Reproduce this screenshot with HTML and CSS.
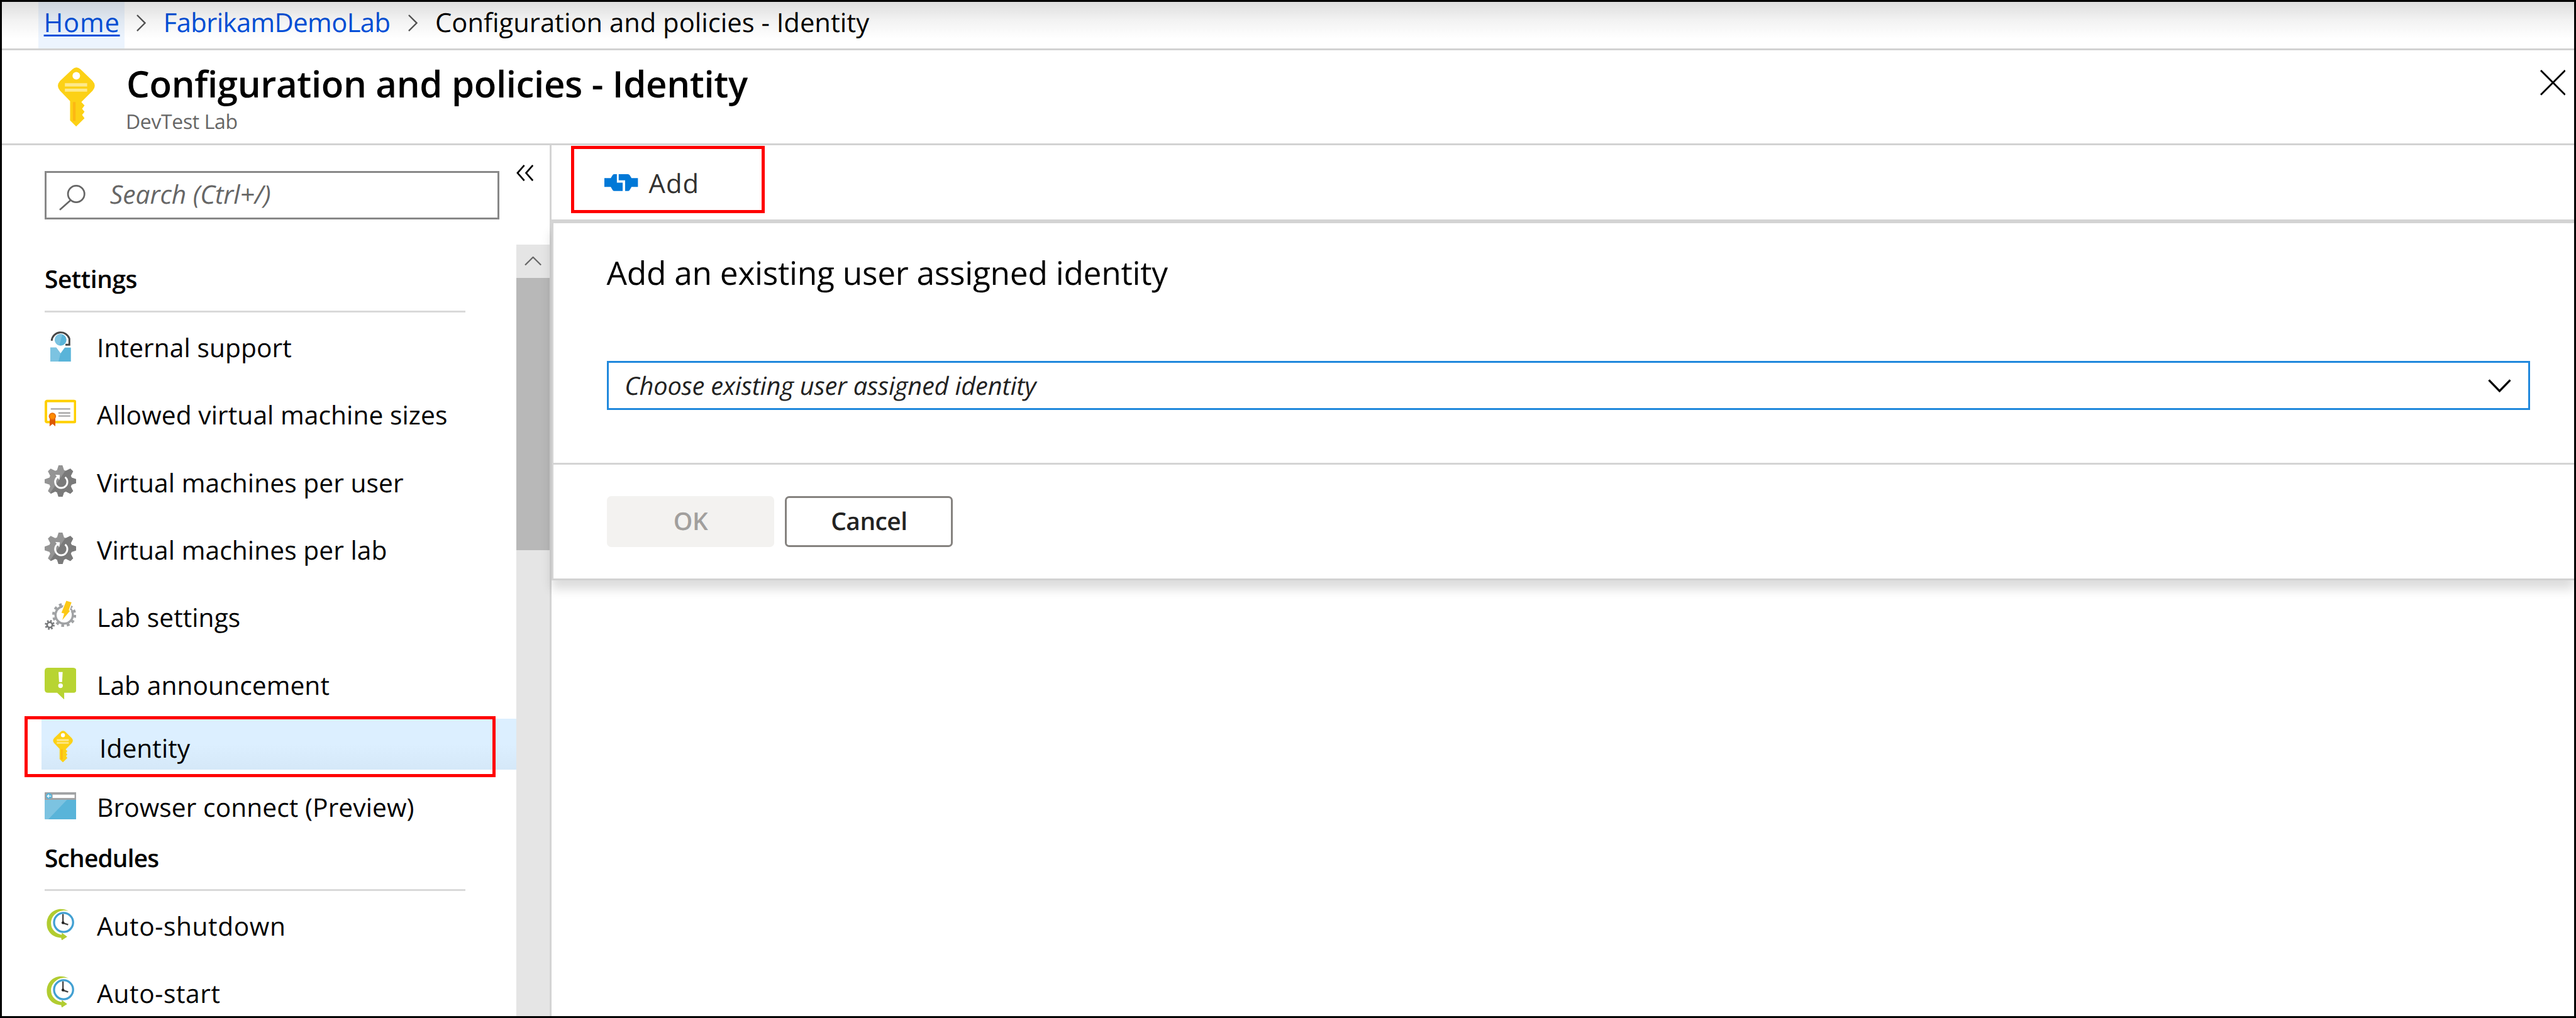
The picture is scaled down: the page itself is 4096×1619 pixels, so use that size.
FILE: index.html
```html
<!DOCTYPE html>
<html lang="en">
<head>
<meta charset="utf-8">
<title>Configuration and policies - Identity</title>
<link rel="stylesheet" href="styles.css">
</head>
<body>
<svg class="defs" aria-hidden="true">
  <defs>
    <polygon id="tooth" points="19.5,10 22.8,0 29.2,0 32.5,10"/>
    <clipPath id="gear-shape">
      <circle cx="26" cy="26" r="19"/>
      <use href="#tooth"/>
      <use href="#tooth" transform="rotate(45 26 26)"/>
      <use href="#tooth" transform="rotate(90 26 26)"/>
      <use href="#tooth" transform="rotate(135 26 26)"/>
      <use href="#tooth" transform="rotate(180 26 26)"/>
      <use href="#tooth" transform="rotate(225 26 26)"/>
      <use href="#tooth" transform="rotate(270 26 26)"/>
      <use href="#tooth" transform="rotate(315 26 26)"/>
    </clipPath>
    <symbol id="gear" viewBox="0 0 52 52">
      <g clip-path="url(#gear-shape)">
        <rect width="52" height="52" fill="#949494"/>
        <polygon points="40,0 52,0 52,52 10,52 10,44" fill="#7a7a7a"/>
      </g>
      <path d="M22 18.6A10 10 0 1 0 33.5 19.4" fill="none" stroke="#fff" stroke-width="3"/>
      <polygon points="17.5,15.5 25,16 24,24" fill="#fff"/>
    </symbol>
    <symbol id="key" viewBox="0 0 61 97">
      <path fill="#fcd116" d="M24 3Q30.3-2.5 37 3L57 22.5Q64 30.5 57 38.5L38.5 57L43.7 62.7L39.7 68L43.7 73L39.7 78L43.7 83.5L30 97L20 87V55.5L3.5 38.5Q-3.5 30.5 3.5 22.5Z"/>
      <circle cx="30.2" cy="14" r="6.2" fill="#fff"/>
      <path fill="#fde98c" d="M11.5 26H48V31.5H11.5ZM11.5 35H48V40H11.5Z"/>
      <rect x="24.5" y="57" width="4.5" height="31" fill="#fdb813"/>
    </symbol>
    <symbol id="clock" viewBox="0 0 52 52">
      <path fill="#b1cc30" d="M39 4C22-5 3.5 6 3.5 25C3.5 38 13 47 27 48L28 52L37 46L28 39.5V43C18 41 10 34 10.5 23C11 10 25 0 39 4Z"/>
      <circle cx="31" cy="22.7" r="15.6" fill="#fff" stroke="#42a0d2" stroke-width="3.4"/>
      <path d="M30 9V23.5L38.5 26.5" fill="none" stroke="#444" stroke-width="2.4"/>
      <circle cx="30" cy="23.2" r="2.3" fill="#222"/>
    </symbol>
  </defs>
</svg>

<div class="portal">
  <nav class="breadcrumb">
    <a class="crumb crumb-home">Home</a>
    <svg class="crumb-sep" viewBox="0 0 16 28"><path d="M1 1L14 14L1 27"/></svg>
    <a class="crumb crumb-lab">FabrikamDemoLab</a>
    <svg class="crumb-sep" viewBox="0 0 16 28"><path d="M1 1L14 14L1 27"/></svg>
    <span class="crumb crumb-current">Configuration and policies - Identity</span>
  </nav>

  <header class="blade-header">
    <svg class="header-key"><use href="#key"/></svg>
    <div class="titles">
      <h1>Configuration and policies - Identity</h1>
      <p>DevTest Lab</p>
    </div>
    <svg class="close" viewBox="0 0 42 42"><path d="M1 1L41 41M41 1L1 41"/></svg>
  </header>

  <div class="blade-body">
    <aside class="sidebar">
      <div class="search-row">
        <div class="search">
          <svg class="search-icon" viewBox="0 0 44 42"><circle cx="28" cy="15" r="13.5"/><path d="M19 25L1 41"/></svg>
          <span>Search (Ctrl+/)</span>
        </div>
        <svg class="collapse" viewBox="0 0 29 27"><path d="M13 1L2 13.5L13 26M27 1L16 13.5L27 26"/></svg>
      </div>
      <div class="menu">
        <div class="menu-list">
          <h2 class="group">Settings</h2>
          <div class="item">
            <svg viewBox="0 0 52 52"><path fill="#59b4d9" d="M9.3 28.5H19L26 38L33 28.5H43V52H9.3Z"/><path fill="#7cc3e1" d="M9.3 28.5H19L26 38L22.5 52H9.3Z"/><circle cx="26.3" cy="16" r="9.5" fill="#59b4d9"/><path fill="#7cc3e1" d="M29 6.9A9.5 9.5 0 1 0 24 25.2Z"/><path d="M11.5 17.5A14.9 14.9 0 0 1 40.5 14V24H34" fill="none" stroke="#464646" stroke-width="3"/></svg>
            <span>Internal support</span>
          </div>
          <div class="item">
            <svg viewBox="0 0 52 52"><rect x="2" y="6" width="48" height="34.5" rx="2" fill="#fff" stroke="#ffd000" stroke-width="4.2"/><path d="M10 19H42M22.5 25.5H42M22.5 30.5H42" stroke="#a8a8a8" stroke-width="2.4"/><path fill="#dd5900" d="M8.5 34H17.5V47.5L13 43.5L8 47.5Z"/><circle cx="12.7" cy="31" r="5" fill="#ff8c00" stroke="#e8700a" stroke-width="2"/></svg>
            <span>Allowed virtual machine sizes</span>
          </div>
          <div class="item"><svg><use href="#gear"/></svg><span>Virtual machines per user</span></div>
          <div class="item"><svg><use href="#gear"/></svg><span>Virtual machines per lab</span></div>
          <div class="item">
            <svg viewBox="0 0 52 52"><g fill="none" stroke="#a0a2a4"><circle cx="32" cy="24.7" r="14.2" stroke-width="3.6"/><circle cx="32" cy="24.7" r="17.6" stroke-width="4.2" stroke-dasharray="4.6 4.615"/></g><g fill="none" stroke="#76787a"><circle cx="8.3" cy="41" r="4.3" stroke-width="2.8"/><circle cx="8.3" cy="41" r="6.7" stroke-width="2.8" stroke-dasharray="2.6 2.662"/></g><path d="M35.5 1.5L44 4L39.5 17L41.5 18L29 33L32 22.5L27.5 21Z" fill="#fff" stroke="#fff" stroke-width="3"/><path d="M35.5 1.5L44 4L39.5 17L41.5 18L29 33L32 22.5L27.5 21Z" fill="#fcc816"/></svg>
            <span>Lab settings</span>
          </div>
          <div class="item">
            <svg viewBox="0 0 52 52"><path fill="#b8d432" d="M5.5 0H46.5Q52 0 52 5.5V35.5Q52 41 46.5 41H32V52L20.5 41H5.5Q0 41 0 35.5V5.5Q0 0 5.5 0Z"/><path fill="#fff" d="M22.7 7H29.5L28.6 23.5H23.6Z"/><circle cx="26" cy="29.3" r="3.8" fill="#fff"/></svg>
            <span>Lab announcement</span>
          </div>
          <div class="item selected"><svg><use href="#key"/></svg><span>Identity</span></div>
          <div class="item browser">
            <svg viewBox="0 0 52 52"><rect y="4" width="52" height="44.5" rx="1.5" fill="#59b4d9"/><path fill="#7cc3e1" d="M0 16H37L6 48.5H1.5Q0 48.5 0 47Z"/><path fill="#a0a2a4" d="M1.5 4H50.5Q52 4 52 5.5V16.5H0V5.5Q0 4 1.5 4Z"/><rect x="13" y="8" width="36" height="5.5" fill="#fff"/><circle cx="7" cy="10.5" r="5" fill="#59b4d9"/><path d="M10.5 10.5H4.5M7 8L4.5 10.5L7 13" fill="none" stroke="#fff" stroke-width="1.3"/></svg>
            <span>Browser connect (Preview)</span>
          </div>
          <h2 class="group schedules">Schedules</h2>
          <div class="item auto"><svg><use href="#clock"/></svg><span>Auto-shutdown</span></div>
          <div class="item auto"><svg><use href="#clock"/></svg><span>Auto-start</span></div>
        </div>
        <div class="scrollbar">
          <div class="scroll-up"><svg viewBox="0 0 28 15"><path d="M1 14L14 1L27 14"/></svg></div>
          <div class="scroll-thumb"></div>
        </div>
      </div>
    </aside>

    <main class="content">
      <div class="toolbar">
        <div class="add-button">
          <svg viewBox="0 0 57 30"><path d="M1 7.5H11.5L14.5 2.5Q15.5 1 17.5 1H21.5V15H31V28.7H17.5Q15.5 28.7 14.5 27L11.5 22H1ZM24.5 1H39.5Q41.5 1 42.5 2.7L45.5 7.5H56V22H45.5L42.5 27Q41.5 28.7 39.5 28.7H35V11H24.5Z"/></svg>
          <span>Add</span>
        </div>
      </div>
      <section class="dialog">
        <div class="dialog-body">
          <h3>Add an existing user assigned identity</h3>
          <div class="dropdown">
            <span>Choose existing user assigned identity</span>
            <svg viewBox="0 0 38 22"><path d="M1.5 1.5L19 19.5L36.5 1.5"/></svg>
          </div>
        </div>
        <div class="dialog-footer">
          <div class="button disabled">OK</div>
          <div class="button">Cancel</div>
        </div>
      </section>
    </main>
  </div>
</div>
</body>
</html>
```
FILE: styles.css
```css
html {
  font-size: 9.70616px;
}

*, *::before, *::after {
  box-sizing: border-box;
}

body {
  margin: 0;
  background: #fff;
  color: #000;
  font-family: "Open Sans", "Noto Sans", sans-serif;
  text-rendering: geometricPrecision;
}

h1, h2, h3, p {
  margin: 0;
}

svg {
  display: block;
  flex: none;
}

.defs {
  position: absolute;
  width: 0;
  height: 0;
}

.portal {
  display: flex;
  flex-direction: column;
  width: 100vw;
  height: 100vh;
  border: 3px solid #000;
  overflow: hidden;
}

/* Breadcrumb */

.breadcrumb {
  display: flex;
  align-items: flex-start;
  flex: none;
  height: 7.95rem;
  padding-left: 6rem;
  border-bottom: 3px solid #d2d2d2;
  position: relative;
  white-space: nowrap;
}

.breadcrumb::after {
  content: "";
  position: absolute;
  inset: 0 0 auto;
  height: 6rem;
  background: linear-gradient(rgba(0, 0, 0, .135), rgba(0, 0, 0, .05) 50%, rgba(0, 0, 0, 0));
}

.crumb {
  font-size: 4.3rem;
  line-height: 6.8rem;
}

.crumb-home {
  width: 14.1rem;
  height: 7.65rem;
  padding-left: .86rem;
  background: #ecf4fe;
  color: #0050dc;
  letter-spacing: .08rem;
  text-decoration: underline;
  text-decoration-thickness: 3px;
  text-underline-offset: 4px;
}

.crumb-sep {
  width: 1.6rem;
  height: 2.8rem;
  margin: 2.1rem 2.85rem 0 2.8rem;
  fill: none;
  stroke: #555;
  stroke-width: 2.4;
}

.crumb-home + .crumb-sep {
  margin-left: 1.9rem;
}

.crumb-lab {
  width: 37.3rem;
  color: #0050dc;
  letter-spacing: -.06rem;
}

/* Header */

.blade-header {
  display: flex;
  align-items: flex-start;
  flex: none;
  height: 15.55rem;
  padding: 1.42rem 1.4rem 0 9.2rem;
  border-bottom: 3px solid #d2d2d2;
}

.header-key {
  width: 6.1rem;
  height: 9.7rem;
  margin-top: 1.35rem;
}

.titles {
  flex: 1;
  padding: .08rem 0 0 5.1rem;
}

.titles h1 {
  font-size: 6rem;
  font-weight: 600;
  line-height: 8rem;
  letter-spacing: -.04rem;
}

.titles p {
  margin-left: -.1rem;
  color: #666;
  font-size: 3.3rem;
  line-height: 4.44rem;
  letter-spacing: -.04rem;
}

.close {
  width: 4.2rem;
  height: 4.2rem;
  margin-top: 1.8rem;
  fill: none;
  stroke: #000;
  stroke-width: 3;
}

/* Sidebar */

.blade-body {
  display: flex;
  flex: 1;
  min-height: 0;
}

.sidebar {
  display: flex;
  flex-direction: column;
  flex: none;
  width: 89.7rem;
}

.search-row {
  display: flex;
  align-items: flex-start;
  flex: none;
  height: 16.23rem;
  padding: 4.2rem 0 0 7rem;
}

.search {
  display: flex;
  align-items: center;
  width: 74.45rem;
  height: 7.9rem;
  padding-left: 2.1rem;
  border: 3px solid #888;
  color: #666;
  font-size: 4.2rem;
  font-style: italic;
  line-height: 6rem;
  letter-spacing: -.01rem;
}

.search span {
  padding-bottom: .5rem;
}

.search-icon {
  width: 4.4rem;
  height: 4.2rem;
  margin: .9rem 3.9rem 0 0;
  fill: none;
  stroke: #666;
  stroke-width: 2.8;
}

.collapse {
  width: 2.9rem;
  height: 2.7rem;
  margin: -1rem 0 0 2.8rem;
  fill: none;
  stroke: #000;
  stroke-width: 2.8;
}

.menu {
  display: flex;
  flex: 1;
  min-height: 0;
}

.menu-list {
  flex: 1;
}

.group {
  width: 68.9rem;
  height: 11.12rem;
  margin-left: 7rem;
  padding-top: 1.75rem;
  border-bottom: 3px solid #d9d9d9;
  font-size: 4rem;
  font-weight: 600;
  line-height: 8rem;
  letter-spacing: -.04rem;
}

.schedules {
  height: 8.02rem;
  padding-top: .1rem;
  line-height: 5.18rem;
  letter-spacing: -.08rem;
}

.item {
  display: flex;
  align-items: center;
  gap: 3.37rem;
  height: 11.06rem;
  margin-left: 7rem;
  font-size: 4.2rem;
  line-height: 6rem;
  letter-spacing: .005rem;
  white-space: nowrap;
}

.item svg {
  width: 5.2rem;
  height: 5.2rem;
}

.item span {
  padding-top: .42rem;
}

.selected {
  position: relative;
  height: 8.27rem;
  margin: .29rem 0 0 6.47rem;
  padding: .7rem 0 0 .93rem;
  background: linear-gradient(#dcefff 50%, #d5e8f8);
}

/* Highlight frame around the selected entry */
.selected::after {
  content: "";
  position: absolute;
  left: -2.77rem;
  top: -.5rem;
  width: 77.2rem;
  height: 10.07rem;
  border: 5px solid #f00;
}

.browser {
  height: 11.86rem;
}

.auto {
  height: 11rem;
  letter-spacing: .06rem;
}

.auto span {
  padding-top: .54rem;
}

.scrollbar {
  flex: none;
  width: 5.45rem;
  background: #e5e5e5;
}

.scroll-up {
  display: flex;
  justify-content: center;
  height: 5.5rem;
  padding-top: 1.95rem;
}

.scroll-up svg {
  width: 2.8rem;
  height: 1.5rem;
  fill: none;
  stroke: #666;
  stroke-width: 2.2;
}

.scroll-thumb {
  height: 44.65rem;
  background: #b8b8b8;
}

/* Content */

.content {
  flex: 1;
  min-width: 0;
  border-left: 3px solid #d4d4d4;
}

.toolbar {
  height: 12.77rem;
  padding: .1rem 0 0 3.25rem;
  border-bottom: 6px solid #d4d4d4;
}

.add-button {
  display: flex;
  align-items: center;
  gap: 1.7rem;
  width: 31.7rem;
  height: 10.97rem;
  padding: 1rem 0 0 4.8rem;
  border: 5px solid #f00;
  color: #323130;
  font-size: 4.3rem;
  line-height: 6rem;
  letter-spacing: .1rem;
}

.add-button svg {
  width: 5.7rem;
  height: 3rem;
  fill: #0078d7;
}

.add-button span {
  padding-top: .5rem;
}

.dialog {
  border-left: 3px solid #d4d4d4;
  border-bottom: 3px solid #d2d2d2;
  box-shadow: 0 14px 16px rgba(0, 0, 0, .14);
}

.dialog-body {
  height: 39.53rem;
  padding: 4.24rem 7.23rem 0 8.75rem;
  border-bottom: 3px solid #d4d4d4;
}

.dialog-body h3 {
  font-size: 5.3rem;
  font-weight: 400;
  line-height: 8rem;
  letter-spacing: -.03rem;
}

.dropdown {
  display: flex;
  align-items: center;
  justify-content: space-between;
  height: 8rem;
  margin-top: 10.36rem;
  padding: 0 2.8rem 0 2.65rem;
  border: 3px solid #2088dc;
  color: #222;
  font-size: 4.1rem;
  font-style: italic;
  line-height: 6rem;
  letter-spacing: -.02rem;
}

.dropdown svg {
  width: 3.8rem;
  height: 2.2rem;
  fill: none;
  stroke: #000;
  stroke-width: 3.4;
}

.dialog-footer {
  display: flex;
  gap: 1.75rem;
  height: 18.7rem;
  padding: 5.2rem 0 0 8.75rem;
}

.button {
  display: flex;
  align-items: center;
  justify-content: center;
  width: 27.5rem;
  height: 8.37rem;
  padding-bottom: .25rem;
  border: 3px solid #85827f;
  border-radius: .7rem;
  color: #222;
  font-size: 4rem;
  font-weight: 600;
  letter-spacing: -.05rem;
}

.disabled {
  border-color: #f3f2f0;
  background: #f3f2f0;
  color: #a19f9d;
}
```
